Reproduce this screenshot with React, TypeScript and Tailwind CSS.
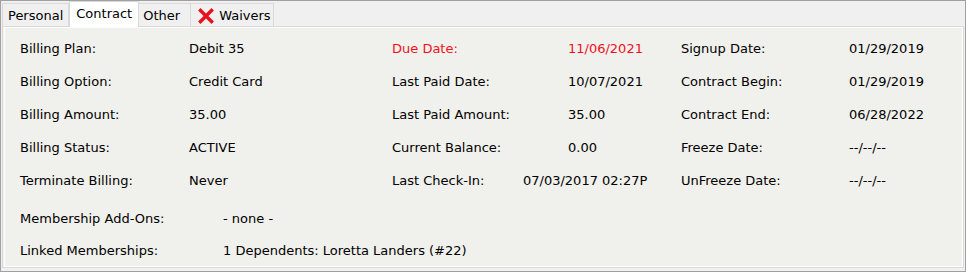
import React from 'react';

const rows: [string, string, string, string, string, string, boolean?][] = [
  ['Billing Plan:', 'Debit 35', 'Due Date:', '11/06/2021', 'Signup Date:', '01/29/2019', true],
  ['Billing Option:', 'Credit Card', 'Last Paid Date:', '10/07/2021', 'Contract Begin:', '01/29/2019'],
  ['Billing Amount:', '35.00', 'Last Paid Amount:', '35.00', 'Contract End:', '06/28/2022'],
  ['Billing Status:', 'ACTIVE', 'Current Balance:', '0.00', 'Freeze Date:', '--/--/--'],
  ['Terminate Billing:', 'Never', 'Last Check-In:', '07/03/2017 02:27P', 'UnFreeze Date:', '--/--/--'],
];

function RedX() {
  return (
    <svg width="16" height="16" viewBox="0 0 16 16" className="mr-[5px]">
      <path d="M2.5 2.5 L13.5 13.5 M13.5 2.5 L2.5 13.5" stroke="#e8101c" strokeWidth="3.4" strokeLinecap="square" />
    </svg>
  );
}

export default function App() {
  return (
    <div
      className="w-[966px] h-[272px] bg-[#f0f0f0] border border-[#a0a0a0] text-[13px] text-black overflow-hidden"
      style={{ fontFamily: '"DejaVu Sans", Verdana, sans-serif' }}
    >
      <div className="flex items-end h-[25px] pl-[1px]">
        <div className="h-[23px] px-[5px] pt-[2px] flex items-center border border-b-0 border-[#d9d9d9] bg-[#f0f0f0]">Personal</div>
        <div className="h-[26px] px-[6px] flex items-center pb-[1px] border border-b-0 border-[#d9d9d9] bg-white relative top-[1px]">Contract</div>
        <div className="h-[23px] px-[4px] pt-[2px] w-[52px] flex items-center border border-b-0 border-l-0 border-[#d9d9d9] bg-[#f0f0f0]">Other</div>
        <div className="h-[23px] pl-[7px] pt-[2px] w-[83px] flex items-center border border-b-0 border-l-0 border-[#d9d9d9] bg-[#f0f0f0]">
          <RedX />
          Waivers
        </div>
      </div>
      <div className="ml-[1px] mr-[1px] h-[242px] border border-[#d9d9d9]">
        <div className="h-full border border-white bg-[#f0f0ec] ml-[1px] pl-[15px] pt-[4px]">
          <div className="grid grid-cols-[169px_203px_176px_113px_168px_1fr]">
            {rows.map((r, i) => (
              <React.Fragment key={i}>
                <div className="h-[33px] flex items-center">{r[0]}</div>
                <div className="h-[33px] flex items-center">{r[1]}</div>
                <div className={`h-[33px] flex items-center ${r[6] ? 'text-[#f0101c]' : ''}`}>{r[2]}</div>
                <div className={`h-[33px] flex items-center whitespace-nowrap ${r[6] ? 'text-[#f0101c]' : ''} ${i === 4 ? '-ml-[45px]' : ''}`}>{r[3]}</div>
                <div className="h-[33px] flex items-center">{r[4]}</div>
                <div className="h-[33px] flex items-center">{r[5]}</div>
              </React.Fragment>
            ))}
          </div>
          <div className="mt-[6px] grid grid-cols-[203px_1fr]">
            <div className="h-[32px] flex items-center">Membership Add-Ons:</div>
            <div className="h-[32px] flex items-center">- none -</div>
            <div className="h-[32px] flex items-center">Linked Memberships:</div>
            <div className="h-[32px] flex items-center">1 Dependents: Loretta Landers (#22)</div>
          </div>
        </div>
      </div>
    </div>
  );
}
